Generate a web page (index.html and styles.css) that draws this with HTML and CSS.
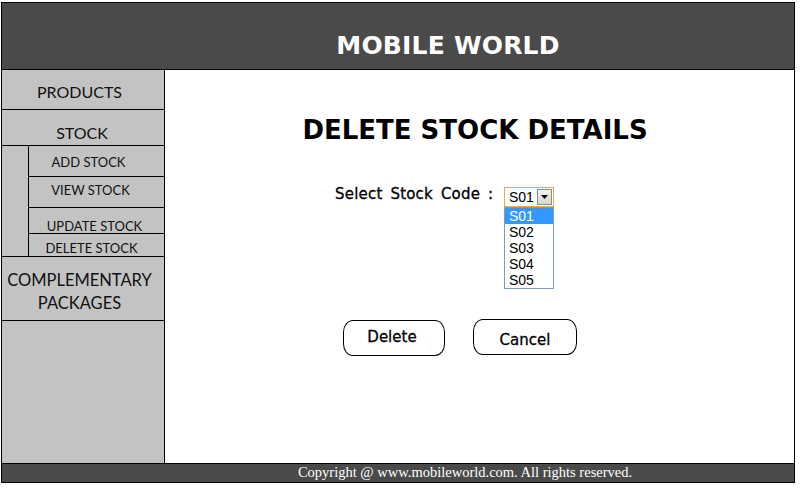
FILE: index.html
```html
<!DOCTYPE html>
<html lang="en">
<head>
<meta charset="utf-8">
<title>Mobile World - Delete Stock Details</title>
<link rel="stylesheet" href="styles.css">
</head>
<body>
<div class="frame">
  <header class="top">
    <h1 class="brand">MOBILE WORLD</h1>
  </header>
  <div class="main">
    <nav class="side">
      <div class="item products">PRODUCTS</div>
      <div class="item stock">STOCK</div>
      <div class="sub">
        <div class="gutter"></div>
        <div class="sublist">
          <div class="subitem add">ADD STOCK</div>
          <div class="subitem view">VIEW STOCK</div>
          <div class="subitem update">UPDATE STOCK</div>
          <div class="subitem delete">DELETE STOCK</div>
        </div>
      </div>
      <div class="item comp">COMPLEMENTARY<br>PACKAGES</div>
      <div class="fill"></div>
    </nav>
    <section class="content">
      <h2 class="page-title">DELETE STOCK DETAILS</h2>
      <div class="form-row">
        <span class="label">Select Stock Code :</span>
        <div class="picker">
          <div class="select">
            <span class="value">S01</span>
            <span class="arrow"><svg width="7" height="4" viewBox="0 0 7 4"><path d="M0 0h7L3.5 4z" fill="#000"/></svg></span>
          </div>
          <ul class="listbox">
            <li class="opt selected">S01</li>
            <li class="opt">S02</li>
            <li class="opt">S03</li>
            <li class="opt">S04</li>
            <li class="opt">S05</li>
          </ul>
        </div>
      </div>
      <div class="buttons">
        <div class="btn btn-delete">Delete</div>
        <div class="btn btn-cancel">Cancel</div>
      </div>
    </section>
  </div>
  <footer class="foot">Copyright @ www.mobileworld.com. All rights reserved.</footer>
</div>
</body>
</html>
```
FILE: styles.css
```css
* { box-sizing: border-box; }

html, body {
  margin: 0;
  padding: 0;
  background: #fff;
}

.frame {
  margin: 2px 0 0 1px;
  width: 794px;
  border: 1px solid #000;
  display: flex;
  flex-direction: column;
}

.top {
  height: 67px;
  background: #4a4a4a;
  border-bottom: 1px solid #000;
  padding: 28px 0 0 100px;
  text-align: center;
}

.brand {
  margin: 0;
  font-family: "DejaVu Sans", sans-serif;
  font-weight: bold;
  font-size: 25px;
  line-height: 30px;
  color: #fff;
  letter-spacing: 0.2px;
}

.main {
  display: flex;
  height: 393px;
}

.side {
  width: 163px;
  background: #c3c3c3;
  border-right: 1px solid #000;
  display: flex;
  flex-direction: column;
  font-family: Lato, "Open Sans", sans-serif;
  color: #111;
  text-align: center;
}

.item {
  border-bottom: 1px solid #000;
  font-size: 16px;
  line-height: 20px;
}

.products {
  height: 40px;
  padding: 12px 7px 0 0;
}

.stock {
  height: 36px;
  padding: 13px 2px 0 0;
}

.sub {
  display: flex;
  height: 111px;
  border-bottom: 1px solid #000;
}

.gutter {
  width: 27px;
  border-right: 1px solid #000;
}

.sublist {
  flex: 1;
  display: flex;
  flex-direction: column;
}

.subitem {
  font-size: 13px;
  line-height: 16px;
  border-bottom: 1px solid #000;
}

.add { height: 31px; padding: 8px 16px 0 0; }
.view { height: 31px; padding: 5px 12px 0 0; }
.update { height: 26px; padding: 10px 4px 0 0; }
.delete { height: 22px; padding: 6px 10px 0 0; border-bottom: none; }

.comp {
  height: 64px;
  font-size: 16.5px;
  line-height: 23px;
  padding: 12px 7px 0 0;
}

.fill { flex: 1; }

.content {
  flex: 1;
  background: #fff;
  padding: 45px 0 0 0;
  position: relative;
}

.page-title {
  margin: 0;
  padding-right: 9px;
  text-align: center;
  font-family: "DejaVu Sans", sans-serif;
  font-weight: bold;
  font-size: 26px;
  line-height: 30px;
  color: #000;
}

.form-row {
  display: flex;
  align-items: flex-start;
  margin: 39px 0 0 170px;
}

.label {
  width: 169px;
  font-family: "DejaVu Sans", sans-serif;
  font-size: 15px;
  line-height: 20px;
  word-spacing: 3px;
  letter-spacing: 0.2px;
  color: #000;
  -webkit-text-stroke: 0.3px #000;
}

.picker {
  position: relative;
  margin-top: 3px;
  width: 50px;
}

.select {
  height: 20px;
  border: 1px solid #e3a94f;
  display: flex;
  align-items: center;
  justify-content: space-between;
  padding: 0 1px 0 4px;
  background: #fff;
}

.value {
  font-family: "Liberation Sans", Arial, sans-serif;
  font-size: 14px;
  line-height: 16px;
  color: #000;
}

.arrow {
  width: 15px;
  height: 16px;
  border: 1px solid #8a8a8a;
  background: linear-gradient(#f2f2f2, #d6d6d6);
  display: flex;
  align-items: center;
  justify-content: center;
}

.listbox {
  position: absolute;
  top: 20px;
  left: 0;
  width: 50px;
  margin: 0;
  padding: 0;
  list-style: none;
  border: 1px solid #7f9db9;
  background: #fff;
}

.opt {
  height: 16px;
  padding-left: 4px;
  font-family: "Liberation Sans", Arial, sans-serif;
  font-size: 14px;
  line-height: 16px;
  color: #000;
}

.opt.selected {
  background: #3399ff;
  color: #fff;
}

.buttons {
  display: flex;
  align-items: flex-start;
  gap: 28px;
  margin: 112px 0 0 178px;
}

.btn {
  height: 36px;
  border: 1px solid #000;
  border-radius: 10px / 12px;
  background: #fff;
  font-family: "DejaVu Sans", sans-serif;
  font-size: 15px;
  line-height: 18px;
  text-align: center;
  color: #000;
  -webkit-text-stroke: 0.3px #000;
}

.btn-delete {
  width: 102px;
  margin-top: 1px;
  padding: 7px 4px 0 0;
}

.btn-cancel {
  width: 104px;
  height: 36px;
  padding: 11px 0 0 0;
}

.foot {
  height: 19px;
  background: #4a4a4a;
  border-top: 1px solid #000;
  padding-left: 134px;
  text-align: center;
  font-family: "Liberation Serif", "Times New Roman", serif;
  font-size: 14.5px;
  line-height: 16px;
  color: #fff;
}
```
